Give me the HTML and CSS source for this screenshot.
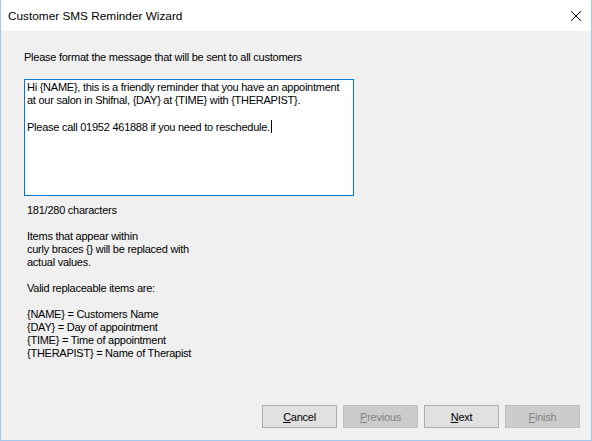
FILE: index.html
```html
<!DOCTYPE html>
<html>
<head>
<meta charset="utf-8">
<link rel="stylesheet" href="styles.css">
</head>
<body>
<div class="window">
  <div class="titlebar">
    <span class="title">Customer SMS Reminder Wizard</span>
    <svg class="close" width="12" height="12" viewBox="0 0 12 12"><path d="M1 1 L11 11 M11 1 L1 11" stroke="#000" stroke-width="1" fill="none"/></svg>
  </div>
  <div class="content">
    <div class="heading">Please format the message that will be sent to all customers</div>
    <div class="editor"><div class="line">Hi {NAME}, this is a friendly reminder that you have an appointment</div><div class="line">at our salon in Shifnal, {DAY} at {TIME} with {THERAPIST}.</div><div class="line">&nbsp;</div><div class="line">Please call 01952 461888 if you need to reschedule.<span class="caret"></span></div></div>
    <div class="info">
      <div class="count">181/280 characters</div>
      <div class="para">Items that appear within<br>curly braces {} will be replaced with<br>actual values.</div>
      <div class="para">Valid replaceable items are:</div>
      <div class="para">{NAME} = Customers Name<br>{DAY} = Day of appointment<br>{TIME} = Time of appointment<br>{THERAPIST} = Name of Therapist</div>
    </div>
  </div>
  <div class="buttons">
    <div class="btn"><u>C</u>ancel</div>
    <div class="btn disabled"><u>P</u>revious</div>
    <div class="btn"><u>N</u>ext</div>
    <div class="btn disabled"><u>F</u>inish</div>
  </div>
</div>
</body>
</html>
```
FILE: styles.css
```css
html, body {
  margin: 0;
  padding: 0;
  background: #f0f0f0;
}
.window {
  width: 592px;
  height: 441px;
  box-sizing: border-box;
  border: 1px solid #a4c7ec;
  border-top: none;
  background: #f0f0f0;
  display: flex;
  flex-direction: column;
  font-family: "Liberation Sans", Arial, sans-serif;
  font-size: 11px;
  letter-spacing: -0.25px;
  color: #000;
}
.titlebar {
  height: 31px;
  flex: none;
  background: #fff;
  display: flex;
  align-items: center;
  justify-content: space-between;
  padding: 0 9px 0 7px;
}
.title {
  font-family: "Liberation Sans", Arial, sans-serif;
  font-size: 11.8px;
  letter-spacing: 0;
  color: #000;
}
.close {
  margin-top: 1px;
}
.content {
  flex: 1;
  padding: 20px 0 0 23px;
}
.heading {
  line-height: 13px;
}
.editor {
  margin-top: 15px;
  width: 330px;
  height: 117px;
  box-sizing: border-box;
  border: 1px solid #0078d7;
  background: #fff;
  padding: 1px 2px;
}
.line {
  line-height: 13px;
  white-space: nowrap;
}
.caret {
  display: inline-block;
  width: 1px;
  height: 13px;
  background: #000;
  vertical-align: -2px;
  margin-left: 1px;
}
.info {
  padding-left: 3px;
  margin-top: 8px;
  line-height: 13px;
}
.para {
  margin-top: 13px;
}
.buttons {
  flex: none;
  display: flex;
  justify-content: flex-end;
  gap: 6px;
  padding: 0 11px 12px 0;
}
.btn {
  width: 75px;
  height: 23px;
  box-sizing: border-box;
  border: 1px solid #adadad;
  background: #e1e1e1;
  display: flex;
  align-items: center;
  justify-content: center;
  color: #000;
}
.btn.disabled {
  background: #cccccc;
  border-color: #bfbfbf;
  color: #838383;
}
```
